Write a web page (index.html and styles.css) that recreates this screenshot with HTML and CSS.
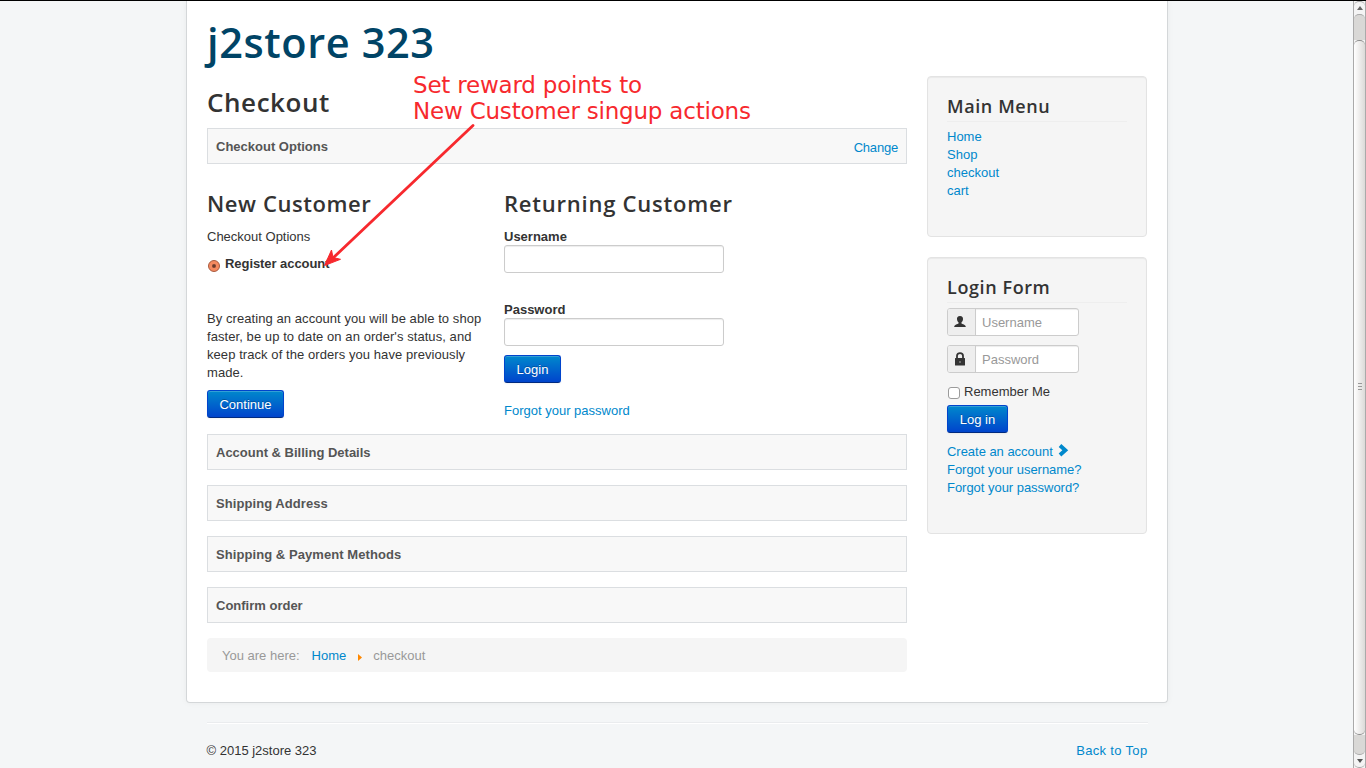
FILE: index.html
```html
<!DOCTYPE html>
<html lang="en">
<head>
<meta charset="utf-8">
<title>Checkout</title>
<link rel="stylesheet" href="styles.css">
</head>
<body>
<div class="window">
  <div class="view">
    <div class="page">
      <header class="site-title"><span class="t-site">j2store 323</span></header>
      <div class="columns">
        <main class="content">
          <h1 class="page-title"><span class="t-check">Checkout</span></h1>
          <div class="step"><b>Checkout Options</b><a>Change</a></div>
          <div class="options">
            <section class="new">
              <h2 class="sub"><span class="t-new">New Customer</span></h2>
              <p class="line">Checkout Options</p>
              <label class="register"><span class="radio"></span><b>Register account</b></label>
              <p class="para">By creating an account you will be able to shop<br>faster, be up to date on an order's status, and<br>keep track of the orders you have previously<br>made.</p>
              <button class="btn continue">Continue</button>
            </section>
            <section class="returning">
              <h2 class="sub"><span class="t-ret">Returning Customer</span></h2>
              <b class="line">Username</b>
              <input class="field" type="text">
              <b class="line second">Password</b>
              <input class="field" type="password">
              <button class="btn login">Login</button>
              <a class="line">Forgot your password</a>
            </section>
          </div>
          <div class="step"><b>Account &amp; Billing Details</b></div>
          <div class="step"><b class="wide">Shipping Address</b></div>
          <div class="step"><b class="wide">Shipping &amp; Payment Methods</b></div>
          <div class="step"><b>Confirm order</b></div>
          <nav class="crumbs"><span>You are here:</span><a>Home</a><svg width="4" height="7" viewBox="0 0 4 7"><path d="M0 0L4 3.5L0 7Z" fill="#f80"/></svg><span>checkout</span></nav>
        </main>
        <aside class="side">
          <div class="well menu">
            <h3><span class="t-menu">Main Menu</span></h3>
            <a>Home</a><a>Shop</a><a>checkout</a><a>cart</a>
          </div>
          <div class="well form">
            <h3><span class="t-form">Login Form</span></h3>
            <div class="group"><span class="addon"><svg width="12" height="12" viewBox="0 0 12 12"><path d="M6 0C8.300 0 9.200 1.300 9 3.200C8.900 4.800 8.200 5.700 7.500 6.200V7.600C8.400 8.200 11.600 8.600 11.800 11H.2C.4 8.600 3.600 8.200 4.500 7.600V6.200C3.800 5.700 3.100 4.800 3 3.200C2.800 1.300 3.700 0 6 0Z" fill="#333"/></svg></span><input type="text" placeholder="Username"></div>
            <div class="group"><span class="addon"><svg width="12" height="14" viewBox="0 0 12 14"><path d="M3 6.500V3.800C3 .2 9 .2 9 3.800V6.500" fill="none" stroke="#333" stroke-width="1.800"/><rect x="1" y="6" width="10" height="7.500" rx=".5" fill="#333"/><path d="M6 9V11" stroke="#aaa" stroke-width="1"/></svg></span><input type="password" placeholder="Password"></div>
            <label class="remember"><span class="check"></span>Remember Me</label>
            <button class="btn signin">Log in</button>
            <div class="links"><a>Create an account <svg class="chev" width="11" height="13" viewBox="0 0 11 13"><path d="M2 1.500L7.300 6.200L2 11" fill="none" stroke="#08c" stroke-width="3.900"/></svg></a><a>Forgot your username?</a><a>Forgot your password?</a></div>
          </div>
        </aside>
      </div>
    </div>
    <footer class="footer"><span>© 2015 j2store 323</span><a>Back to Top</a></footer>
  </div>
  <div class="scrollbar">
    <span class="cap"><svg width="6" height="4" viewBox="0 0 6 4"><path d="M0 4L3 0L6 4Z" fill="#666"/></svg></span>
    <span class="trough"></span>
    <span class="thumb"><i></i><i></i><i></i></span>
    <span class="trough low"></span>
    <span class="cap end"><svg width="6" height="4" viewBox="0 0 6 4"><path d="M0 0L3 4L6 0Z" fill="#555"/></svg></span>
  </div>
</div>
<div class="note"><span class="n1">Set reward points to</span><br><span class="n2">New Customer singup actions</span></div>
<svg class="arrow" width="160" height="150" viewBox="0 0 160 150"><path d="M152 5.500L12 138" stroke="#f7292e" stroke-width="2.800" stroke-linecap="round"/><path d="M3.500 145.500L10.500 130L12 137.500L19.500 139.300Z" fill="#f7292e" stroke="#f7292e" stroke-width="1"/></svg>
</body>
</html>
```

FILE: styles.css
```css
* { box-sizing: border-box; }
body { margin: 0; font: 13px/18px "Liberation Sans", Arial, sans-serif; color: #333; background: #f4f6f7; overflow: hidden; }
a { color: #08c; text-decoration: none; }
h1, h2, h3, p { margin: 0; }
input, button { font: inherit; }
.window { display: flex; height: 768px; border-top: 1px solid #000; }
.view { flex: 1; display: flex; flex-direction: column; align-items: center; }
.page { width: 982px; height: 702px; padding: 0 20px; background: #fff; border: 1px solid #d4d7d9; border-top: 0; border-radius: 0 0 4px 4px; box-shadow: 0 0 6px rgba(0,0,0,.05); margin-left: 1px; }
.site-title, .page-title, .sub, .well h3 { font-family: "Open Sans", sans-serif; font-weight: 600; white-space: nowrap; }
.site-title { height: 75px; padding-top: 11px; font-size: 41.5px; line-height: 60px; color: #004466; }
.t-site { letter-spacing: .6px; }
.t-check { letter-spacing: .55px; }
.t-new { letter-spacing: .58px; }
.t-ret { letter-spacing: .77px; }
.t-menu, .t-form { letter-spacing: .6px; }
.columns { display: flex; gap: 20px; }
.content { width: 700px; }
.page-title { height: 52px; padding-top: 6px; font-size: 26px; line-height: 40px; }
.step { display: flex; justify-content: space-between; height: 36px; padding: 9px 8px 7px; margin-bottom: 15px; background: #f8f8f8; border: 1px solid #dbdee1; color: #555; }
.step a { margin-top: 1px; letter-spacing: -.2px; }
.wide { letter-spacing: .07px; }
.options { display: flex; height: 255px; }
.new { width: 297px; }
.sub { height: 49px; padding-top: 9px; font-size: 22px; line-height: 30px; }
.line { display: block; height: 18px; }
.register { display: flex; margin-top: 9px; height: 18px; letter-spacing: -.06px; }
.radio { width: 12px; height: 12px; margin: 5px 5px 0 1px; border: 1px solid #a8573a; border-radius: 50%; background: radial-gradient(circle, #6b3a2b 0 1.3px, #f58a60 2.5px); }
.para { margin: 37px 0 8px; letter-spacing: .07px; }
.btn { display: block; height: 28px; padding: 5px 0 3px; line-height: 18px; color: #fff; background: linear-gradient(#0088cc, #0044cc); border: 1px solid #04c; border-color: #0044cc #0044cc #002a80; border-radius: 3px; text-shadow: 0 -1px 0 rgba(0,0,0,.25); box-shadow: inset 0 1px 0 rgba(255,255,255,.2), 0 1px 2px rgba(0,0,0,.05); }
.continue { width: 77px; }
.signin { width: 61px; }
.field { display: block; width: 220px; height: 28px; margin-top: -1px; border: 1px solid #ccc; border-radius: 3px; background: #fff; box-shadow: inset 0 1px 1px rgba(0,0,0,.075); }
.second { margin-top: 28px; }
.login { width: 57px; margin: 9px 0 19px; }
.crumbs { display: flex; height: 34px; padding: 9px 15px 7px; background: #f5f5f5; border-radius: 4px; color: #999; }
.crumbs a { margin: 0 12px; }
.crumbs svg { margin: 7px 11px 0 0; }
.side { width: 220px; }
.well { padding: 19px; background: #f5f5f5; border: 1px solid #e3e3e3; border-radius: 4px; box-shadow: inset 0 1px 1px rgba(0,0,0,.05); }
.menu { height: 161px; margin-bottom: 20px; }
.form { height: 277px; }
.well h3 { height: 26px; border-bottom: 1px solid #eee; margin-bottom: 5px; font-size: 18px; line-height: 20px; }
.menu h3 { margin-bottom: 6px; }
.well a { display: block; }
.group { display: flex; width: 132px; height: 28px; margin-bottom: 9px; border: 1px solid #ccc; border-radius: 3px; overflow: hidden; background: #fff; }
.addon { width: 28px; flex: none; display: flex; justify-content: center; padding: 7px 4px 0 0; background: #eee; border-right: 1px solid #ccc; }
.group:nth-of-type(2) .addon { padding-top: 6px; }
.group input { width: 103px; border: 0; padding: 2px 6px 0; background: none; box-shadow: inset 0 1px 1px rgba(0,0,0,.075); }
.group input::placeholder { color: #999; }
.remember { display: flex; height: 18px; margin: 10px 0 4px; }
.check { width: 12px; height: 12px; margin: 4px 4px 0 1px; border: 1px solid #9b9b9b; border-radius: 3px; background: #fff; }
.links { margin-top: 10px; }
.links a { height: 18px; letter-spacing: -.03px; }
.links .chev { vertical-align: -1px; margin-left: 2px; }
.footer { display: flex; justify-content: space-between; width: 941px; margin: 19px 0 0 1px; padding-top: 19px; border-top: 1px solid #eaecee; box-shadow: inset 0 1px #fff; }
.footer a { letter-spacing: .33px; }
.scrollbar { display: flex; flex-direction: column; width: 13px; border: solid #aaa; border-width: 0 1px; background: #f4f4f4; }
.cap { height: 13px; display: flex; justify-content: center; align-items: center; border-top: 1px solid #aaa; border-radius: 5px 5px 0 0; }
.end { height: 13px; border-top: 0; border-bottom: 1px solid #aaa; border-radius: 0 0 5px 5px; }
.trough { height: 26px; background: #d9d8d6; border-top: 1px solid #aaa; border-radius: 5px 5px 0 0; }
.low { height: 20px; border-top: 0; border-bottom: 1px solid #aaa; border-radius: 0 0 5px 5px; }
.thumb { flex: 1; display: flex; flex-direction: column; align-items: center; justify-content: center; gap: 2px; padding-bottom: 3px; border: solid #8e8e8e; border-width: 1px 0; border-radius: 5px; background: linear-gradient(90deg, #fff, #dcdad8); }
.thumb i { width: 4px; height: 1px; background: #999; }
.note { position: absolute; left: 413px; top: 72px; font: 23px/26px "DejaVu Sans", sans-serif; letter-spacing: -.21px; color: #f7292e; white-space: nowrap; }
.arrow { position: absolute; left: 321px; top: 120px; }
```
